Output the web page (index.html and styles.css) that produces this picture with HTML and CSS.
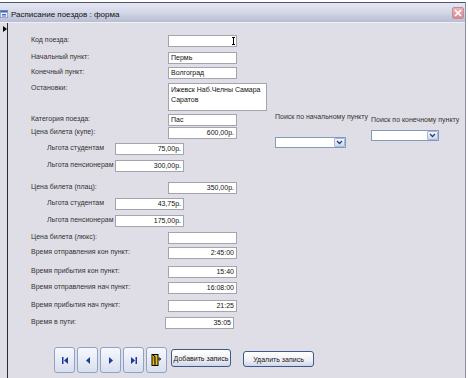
FILE: index.html
```html
<!DOCTYPE html>
<html lang="ru">

<head>
  <meta charset="utf-8">
  <title>Расписание поездов : форма</title>
  <link rel="stylesheet" href="styles.css">
</head>

<body>
  <div class="window">
    <div class="titlebar">
      <svg class="form-icon" width="8" height="8" viewBox="0 0 8 8">
        <rect x="0" y="0" width="8" height="8" fill="#e8ecf8" stroke="#5070b0"/>
        <rect x="0.5" y="0.5" width="7" height="2" fill="#3c64b4"/>
        <path d="M2 4.5h4M2 6h4" stroke="#5070b0"/>
      </svg>
      <span class="title">Расписание поездов : форма</span>
      <span class="close">
        <svg width="12" height="12" viewBox="0 0 12 12">
          <path d="M3 3l6 6M9 3l-6 6" stroke="#fff" stroke-width="1.6"/>
        </svg>
      </span>
    </div>

    <div class="body">
      <div class="selector">
        <span class="current"></span>
      </div>

      <div class="form">
        <div class="top">
          <div class="fields">
            <div class="row">
              <span class="label">Код поезда:</span>
              <span class="box num">
                <svg class="caret" width="3" height="8" viewBox="0 0 3 8">
                  <path d="M0 0.5h3M1.5 0v8M0 7.5h3" stroke="#000"/>
                </svg>
              </span>
            </div>
            <div class="row mt5">
              <span class="label">Начальный пункт:</span>
              <span class="box">Пермь</span>
            </div>
            <div class="row mt3">
              <span class="label">Конечный пункт:</span>
              <span class="box">Волгоград</span>
            </div>
            <div class="row mt4">
              <span class="label">Остановки:</span>
              <span class="box memo">Ижевск Наб.Челны Самара Саратов</span>
            </div>
            <div class="row mt3">
              <span class="label">Категория поезда:</span>
              <span class="box">Пас</span>
            </div>
            <div class="row mt1">
              <span class="label">Цена билета (купе):</span>
              <span class="box num">600,00р.</span>
            </div>
            <div class="row sub mt4">
              <span class="label">Льгота студентам</span>
              <span class="box num">75,00р.</span>
            </div>
            <div class="row sub mt5">
              <span class="label">Льгота пенсионерам</span>
              <span class="box num">300,00р.</span>
            </div>
            <div class="row mt10">
              <span class="label">Цена билета (плац):</span>
              <span class="box num">350,00р.</span>
            </div>
            <div class="row sub mt4">
              <span class="label">Льгота студентам</span>
              <span class="box num">43,75р.</span>
            </div>
            <div class="row sub mt5">
              <span class="label">Льгота пенсионерам</span>
              <span class="box num">175,00р.</span>
            </div>
            <div class="row mt5">
              <span class="label">Цена билета (люкс):</span>
              <span class="box num"></span>
            </div>
            <div class="row mt3">
              <span class="label">Время отправления кон пункт:</span>
              <span class="box num">2:45:00</span>
            </div>
            <div class="row mt7">
              <span class="label">Время прибытия кон пункт:</span>
              <span class="box num">15:40</span>
            </div>
            <div class="row mt4">
              <span class="label">Время отправления нач пункт:</span>
              <span class="box num">16:08:00</span>
            </div>
            <div class="row mt6">
              <span class="label">Время прибытия нач пункт:</span>
              <span class="box num">21:25</span>
            </div>
            <div class="row mt5 last">
              <span class="label">Время в пути:</span>
              <span class="box num">35:05</span>
            </div>
          </div>

          <div class="search">
            <div class="search-group start">
              <p class="search-title">Поиск по начальному пункту</p>
              <div class="combo">
                <span class="combo-btn">
                  <svg width="7" height="5" viewBox="0 0 7 5">
                    <path d="M1 1l2.5 2.5L6 1" stroke="#2a3c78" stroke-width="1.3" fill="none"/>
                  </svg>
                </span>
              </div>
            </div>
            <div class="search-group end">
              <p class="search-title">Поиск по конечному пункту</p>
              <div class="combo">
                <span class="combo-btn">
                  <svg width="7" height="5" viewBox="0 0 7 5">
                    <path d="M1 1l2.5 2.5L6 1" stroke="#2a3c78" stroke-width="1.3" fill="none"/>
                  </svg>
                </span>
              </div>
            </div>
          </div>
        </div>

        <div class="nav">
          <span class="nav-btn">
            <svg width="6" height="7" viewBox="0 0 6 7"><rect x="0" y="0" width="1.5" height="7" fill="#1c3c9c"/><path d="M6 0v7L2 3.5z" fill="#1c3c9c"/></svg>
          </span>
          <span class="nav-btn">
            <svg width="4" height="7" viewBox="0 0 4 7"><path d="M4 0v7L0 3.5z" fill="#1c3c9c"/></svg>
          </span>
          <span class="nav-btn">
            <svg width="4" height="7" viewBox="0 0 4 7"><path d="M0 0v7L4 3.5z" fill="#1c3c9c"/></svg>
          </span>
          <span class="nav-btn">
            <svg width="6" height="7" viewBox="0 0 6 7"><path d="M0 0v7L4 3.5z" fill="#1c3c9c"/><rect x="4.5" y="0" width="1.5" height="7" fill="#1c3c9c"/></svg>
          </span>
          <span class="nav-btn">
            <svg width="11" height="12" viewBox="0 0 11 12">
              <rect x="1" y="0.5" width="6" height="11" fill="#e8c020" stroke="#000"/>
              <path d="M1 0.5l3 2v9.5" stroke="#000" fill="#c89a10"/>
              <path d="M7 5h2.5M8.2 3.6l1.5 1.4-1.5 1.4" stroke="#000" fill="none"/>
            </svg>
          </span>
          <span class="cmd-btn add">Добавить запись</span>
          <span class="cmd-btn del">Удалить запись</span>
        </div>
      </div>
    </div>
  </div>
</body>

</html>
```

FILE: styles.css
```css
body {
  margin: 0;
  padding: 0;
  background-color: #fff;
  font-family: 'Liberation Sans', Arial, sans-serif;
  color: #222;
}

.window {
  width: 465px;
  height: 375px;
  margin-top: 2px;
  border-top: 1px solid #50546c;
  border-right: 1px solid #8a90a8;
  background-color: #dfdee7;
  display: flex;
  flex-direction: column;
}

.titlebar {
  height: 19px;
  display: flex;
  align-items: center;
  border-bottom: 1px solid #eef0f8;
  background: linear-gradient(#e4e7f2, #d6d9e8 45%, #b9bdd3);
}

.form-icon {
  margin-left: 0;
  margin-top: 3px;
}

.title {
  margin-left: 3px;
  margin-top: 3px;
  font-size: 8px;
  color: #111;
}

.close {
  align-self: flex-start;
  margin-left: auto;
  margin-right: 1px;
  margin-top: 4px;
  width: 12px;
  height: 12px;
  display: flex;
  border: 1px solid #c48c94;
  border-radius: 2px;
  box-sizing: border-box;
  background: linear-gradient(#eab4b8, #d88c94);
}

.close svg {
  margin: -1px;
}

.body {
  flex: 1;
  display: flex;
}

.selector {
  width: 9px;
  border-right: 1px solid #2c2c2c;
}

.current {
  display: block;
  width: 0;
  height: 0;
  margin: 3px 0 0 3px;
  border-left: 4px solid #000;
  border-top: 3px solid transparent;
  border-bottom: 3px solid transparent;
}

.form {
  flex: 1;
  padding-top: 12px;
  padding-left: 23px;
}

.top {
  display: flex;
}

.fields {
  width: 244px;
}

.row {
  display: flex;
  align-items: flex-start;
}

.label {
  width: 137px;
  font-size: 7px;
  line-height: 8px;
  margin-top: 1px;
  color: #333;
  white-space: nowrap;
}

.row.sub {
  padding-left: 16px;
}

.row.sub .label {
  width: 68px;
}

.row.last .label {
  width: 134px;
}

.box {
  box-sizing: border-box;
  width: 69px;
  height: 12px;
  padding: 0 2px;
  border: 1px solid #a4a4ac;
  background-color: #fff;
  font-size: 7px;
  line-height: 10px;
  color: #111;
  white-space: nowrap;
  display: flex;
  align-items: center;
}

.box.num {
  justify-content: flex-end;
}

.box.memo {
  width: 99px;
  height: 28px;
  align-items: flex-start;
  white-space: normal;
  padding-top: 1px;
}

.caret {
  margin-right: -1px;
}

.mt1 { margin-top: 1px; }
.mt3 { margin-top: 3px; }
.mt4 { margin-top: 4px; }
.mt5 { margin-top: 5px; }
.mt6 { margin-top: 6px; }
.mt7 { margin-top: 7px; }
.mt10 { margin-top: 10px; }

.search {
  display: flex;
}

.search-group {
  width: 96px;
}

.search-title {
  margin: 0;
  font-size: 7px;
  line-height: 8px;
  color: #333;
  white-space: nowrap;
}

.combo {
  box-sizing: border-box;
  height: 11px;
  display: flex;
  justify-content: flex-end;
  border: 1px solid #7f9db9;
  background-color: #fff;
}

.combo-btn {
  box-sizing: border-box;
  width: 11px;
  height: 9px;
  display: flex;
  align-items: center;
  justify-content: center;
  border: 1px solid #a8b8d8;
  border-radius: 1px;
  background: linear-gradient(#f4f6fc, #cfd8ee);
}

.search-group.start {
  padding-top: 78px;
}

.search-group.start .combo {
  width: 71px;
  margin-top: 16px;
}

.search-group.end {
  padding-top: 81px;
}

.search-group.end .combo {
  width: 68px;
  margin-top: 6px;
}

.nav {
  display: flex;
  align-items: flex-start;
  margin-top: 18px;
  padding-left: 23px;
}

.nav-btn {
  box-sizing: border-box;
  width: 21px;
  height: 26px;
  margin-right: 2px;
  display: flex;
  align-items: center;
  justify-content: center;
  border: 1px solid #8ea2c6;
  border-radius: 3px;
  background: linear-gradient(#f6f8fd, #d9dfee);
}

.cmd-btn {
  box-sizing: border-box;
  display: flex;
  align-items: center;
  justify-content: center;
  border: 1px solid #3c5a8c;
  border-radius: 3px;
  background: linear-gradient(#ffffff, #eef0f6 60%, #cfd5e6);
  font-size: 7px;
  color: #111;
  white-space: nowrap;
}

.cmd-btn.add {
  width: 60px;
  height: 18px;
  margin-left: 2px;
  margin-top: 2px;
}

.cmd-btn.del {
  width: 71px;
  height: 16px;
  margin-left: 12px;
  margin-top: 4px;
}
```
